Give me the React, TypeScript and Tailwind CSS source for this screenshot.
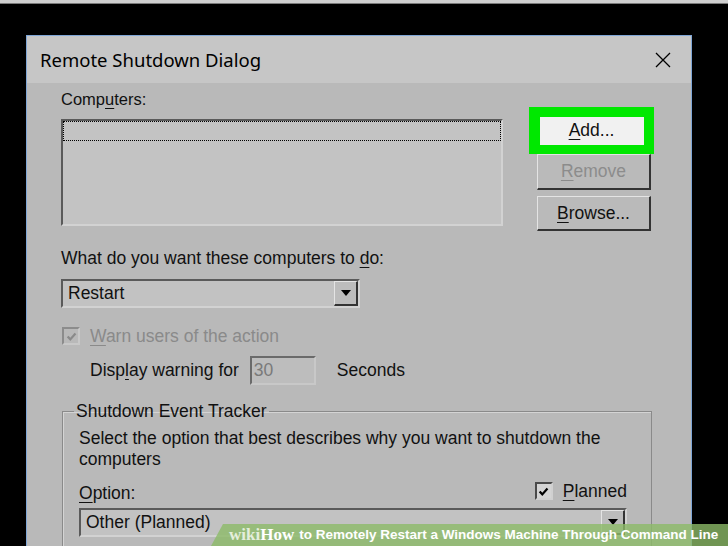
import React from "react";

const ui = "font-['Liberation_Sans',Arial,sans-serif]";
const sunken =
  "border-2 border-t-[#5a5a5a] border-l-[#5a5a5a] border-r-[#d2d2d2] border-b-[#d2d2d2]";
const raised =
  "border-t border-l border-r-2 border-b-2 border-t-[#e4e4e4] border-l-[#e4e4e4] border-r-[#333333] border-b-[#333333]";

function U({ children }: { children: React.ReactNode }) {
  return <span className="underline decoration-1 underline-offset-[3px]">{children}</span>;
}

function Combo({ value, className = "" }: { value: string; className?: string }) {
  return (
    <div className={`flex h-[29px] items-center bg-[#c2c2c2] ${sunken} ${className}`}>
      <span className="flex-1 pl-[5px] text-[17.5px] leading-none">{value}</span>
      <div className={`flex h-[25px] w-[24px] items-center justify-center bg-[#bcbcbc] ${raised}`}>
        <svg width="10" height="6" viewBox="0 0 10 6">
          <path d="M0 0h10L5 6z" fill="#000" />
        </svg>
      </div>
    </div>
  );
}

function Check({ disabled = false }: { disabled?: boolean }) {
  return (
    <div
      className={`flex h-[18px] w-[18px] shrink-0 items-center justify-center border-2 ${
        disabled
          ? "border-t-[#8c8c8c] border-l-[#8c8c8c] border-r-[#c8c8c8] border-b-[#c8c8c8] bg-[#b9b9b9]"
          : "border-t-[#4a4a4a] border-l-[#4a4a4a] border-r-[#d0d0d0] border-b-[#d0d0d0] bg-[#d4d4d4]"
      }`}
    >
      <svg width="11" height="11" viewBox="0 0 10 10">
        <path
          d="M1.5 5l2.4 2.6L8.6 2.2"
          stroke={disabled ? "#8a8a8a" : "#000"}
          strokeWidth="2"
          fill="none"
        />
      </svg>
    </div>
  );
}

export default function App() {
  return (
    <div className={`relative h-[546px] w-[728px] overflow-hidden bg-black ${ui} text-[#111]`}>
      <div className="h-[4px] border-b border-[#7a7a7a] bg-[#cfcfcf]" />

      <div className="ml-[26px] mt-[31px] w-[666px] border border-[#7fa6d6]">
        {/* title bar */}
        <div className="flex h-[47px] items-center justify-between bg-[#c6c6c6] pl-[13px] pr-[20px]">
          <span className="mt-[1px] font-['Noto_Sans',sans-serif] text-[18.5px] text-black">
            Remote Shutdown Dialog
          </span>
          <svg width="16" height="16" viewBox="0 0 16 16">
            <path d="M1 1l14 14M15 1L1 15" stroke="#000" strokeWidth="1.3" />
          </svg>
        </div>

        {/* body */}
        <div className="h-[480px] bg-[#b9b9b9] pl-[34px] pt-[6px]">
          <div className="flex items-start">
            <div>
              <div className="h-[20px] text-[16.5px] leading-[20px]">
                Comp<U>u</U>ters:
              </div>
              <div className={`mt-[10px] h-[107px] w-[442px] bg-[#c3c3c3] ${sunken}`}>
                <div className="h-[20px] border border-dotted border-black" />
              </div>
            </div>
            <div className="ml-[26px] mt-[18px]">
              <div className="flex h-[47px] w-[125px] items-center justify-center bg-[#00e800]">
                <div className="flex h-[28px] w-[104px] items-center justify-center bg-[#f1f1f1] text-[17.5px]">
                  <U>A</U>dd...
                </div>
              </div>
              <div
                className={`ml-[8px] flex h-[36px] w-[114px] items-center justify-center bg-[#bababa] text-[17.5px] text-[#8c8c8c] ${raised}`}
              >
                <U>R</U>emove
              </div>
              <div
                className={`ml-[8px] mt-[6px] flex h-[35px] w-[114px] items-center justify-center bg-[#bababa] text-[17.5px] ${raised}`}
              >
                <U>B</U>rowse...
              </div>
            </div>
          </div>

          <div className="mt-[17px] h-[20px] text-[17.5px] leading-[20px]">
            What do you want these computers to <U>d</U>o:
          </div>
          <Combo value="Restart" className="mt-[11px] w-[299px]" />

          <div className="ml-[1px] mt-[18px] flex h-[20px] items-center gap-[10px]">
            <Check disabled />
            <span className="text-[17.5px] text-[#8a8a8a]">
              <U>W</U>arn users of the action
            </span>
          </div>

          <div className="ml-[29px] mt-[10px] flex h-[29px] items-center text-[17.5px]">
            <span>
              Disp<U>l</U>ay warning for
            </span>
            <div className="ml-[11px] flex h-[29px] w-[66px] items-center border-2 border-t-[#6a6a6a] border-l-[#6a6a6a] border-r-[#c8c8c8] border-b-[#c8c8c8] bg-[#bdbdbd] pl-[2px] text-[#7a7a7a]">
              30
            </div>
            <span className="ml-[21px]">Seconds</span>
          </div>

          <fieldset className="ml-[1px] mt-[16px] w-[590px] border border-[#8a8a8a] pb-[20px] pl-[16px] pr-[24px] pt-[7px] shadow-[inset_1px_1px_0_#d4d4d4]">
            <legend className="-ml-[5px] px-[2px] text-[17.5px] leading-[20px]">
              Shutdown Event Tracker
            </legend>
            <div className="text-[17.5px] leading-[21px]">
              Select the option that best describes why you want to shutdown the
              <br />
              computers
            </div>
            <div className="mt-[10px] flex h-[22px] items-center justify-between text-[17.5px]">
              <span className="mt-[5px]">
                <U>O</U>ption:
              </span>
              <div className="flex items-center gap-[10px]">
                <Check />
                <span>
                  <U>P</U>lanned
                </span>
              </div>
            </div>
            <Combo value="Other (Planned)" className="mt-[6px] w-full" />
          </fieldset>
        </div>
      </div>

      {/* watermark */}
      <div className="absolute bottom-0 left-[211px] right-0 flex h-[22px] items-center bg-[#8cba68]/80 pl-[18px] [clip-path:polygon(12px_0,100%_0,100%_100%,0_100%)]">
        <span className="font-['Liberation_Serif',serif] text-[17px] font-bold text-[#e4eedc]">wiki</span>
        <span className="font-['Liberation_Serif',serif] text-[17px] font-bold text-white">How</span>
        <span className="ml-[5px] text-[13.5px] font-bold text-white">
          to Remotely Restart a Windows Machine Through Command Line
        </span>
      </div>
    </div>
  );
}
